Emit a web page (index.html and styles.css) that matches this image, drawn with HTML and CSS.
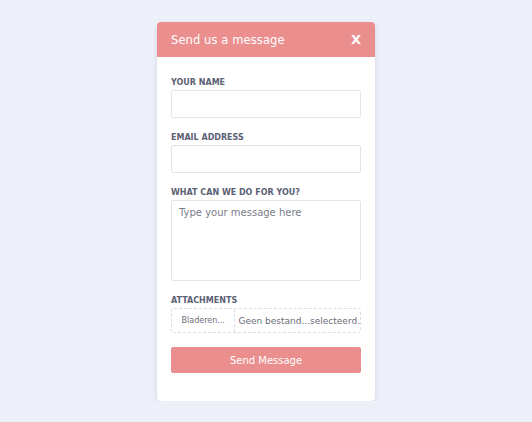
FILE: index.html
```html
<!DOCTYPE html>
<html lang="en">
  <head>
    <meta charset="utf-8">
    <title>Send us a message</title>
    <meta name="viewport" content="width=device-width">
    <link rel="stylesheet" href="styles.css">
  </head>
  <body>
    <div class="modal">
      <header class="modal-head">
        <h1>Send us a message</h1>
        <span class="close">X</span>
      </header>
      <form class="modal-body">
        <label class="field">
          <span class="label">Your name</span>
          <input type="text" class="input">
        </label>
        <label class="field">
          <span class="label">Email address</span>
          <input type="email" class="input">
        </label>
        <label class="field">
          <span class="label">What can we do for you?</span>
          <textarea class="input textarea" placeholder="Type your message here"></textarea>
        </label>
        <div class="field">
          <span class="label">Attachments</span>
          <div class="file">
            <span class="file-btn">Bladeren...</span>
            <span class="file-name">Geen bestand...selecteerd.</span>
          </div>
        </div>
        <button type="button" class="send">Send Message</button>
      </form>
    </div>
  </body>
</html>
```

FILE: styles.css
```css
body {
  background-color: #eef0f9;
  font-family: "DejaVu Sans", sans-serif;
  margin: 0;
  padding: 22px 0 0;
}

.modal {
  width: 218px;
  margin: 0 0 0 157px;
  background-color: #fff;
  border-radius: 4px;
  box-shadow: 0 2px 5px rgba(60, 70, 110, 0.18);
  overflow: hidden;
}

.modal-head {
  display: flex;
  align-items: center;
  justify-content: space-between;
  height: 35px;
  padding: 0 14px;
  background-color: #eb8e8e;
  color: #fff;
}

.modal-head h1 {
  margin: 0;
  font-size: 11.5px;
  font-weight: normal;
  letter-spacing: 0.1px;
}

.close {
  font-size: 13px;
  font-weight: bold;
}

.modal-body {
  display: flex;
  flex-direction: column;
  padding: 20px 14px 28px;
}

.field {
  display: flex;
  flex-direction: column;
  margin-bottom: 14px;
}

.label {
  font-size: 8px;
  line-height: 12px;
  font-weight: bold;
  text-transform: uppercase;
  color: #5c6174;
  margin-bottom: 1px;
}

.input {
  height: 28px;
  box-sizing: border-box;
  border: 1px solid #e3e4e8;
  border-radius: 2px;
  font-family: inherit;
  font-size: 10px;
  padding: 6px 7px;
}

.textarea {
  height: 81px;
  resize: none;
  color: #666;
}

.textarea::placeholder {
  color: #7a7d88;
}

.file {
  display: flex;
  height: 25px;
  box-sizing: border-box;
  border: 1px dashed #dcdde2;
  border-radius: 3px;
  font-size: 9px;
  color: #6a6d78;
}

.file-btn {
  display: flex;
  align-items: center;
  justify-content: center;
  width: 64px;
  border-right: 1px dashed #dcdde2;
  font-size: 8px;
}

.file-name {
  display: flex;
  align-items: center;
  padding-left: 3px;
  white-space: nowrap;
}

.send {
  height: 26px;
  border: none;
  border-radius: 2px;
  background-color: #eb8e8e;
  color: #fff;
  font-family: inherit;
  font-size: 10px;
}
```
